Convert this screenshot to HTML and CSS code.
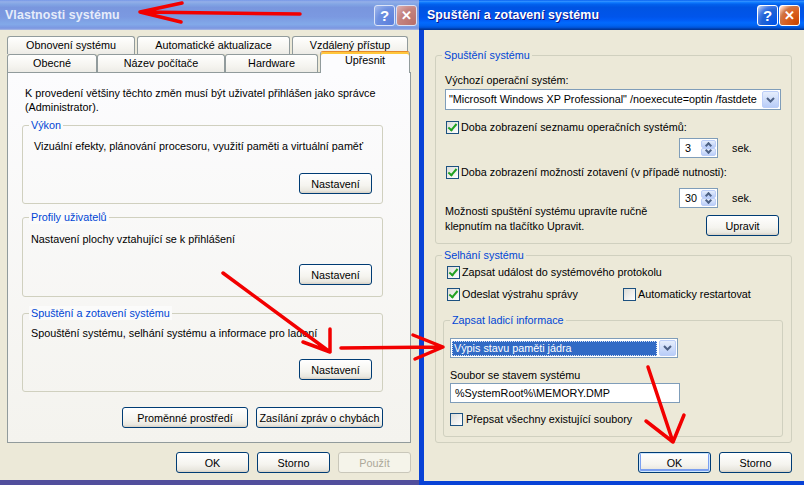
FILE: index.html
```html
<!DOCTYPE html>
<html lang="cs">
<head>
    <meta charset="UTF-8">
    <title>Vlastnosti systému</title>
    <link rel="stylesheet" href="styles.css">
</head>
<body>
    <div class="win win-left">
        <div class="titlebar">
            <span class="title-text">Vlastnosti systému</span>
            <div class="title-btns">
                <span class="tbtn help">?</span>
                <span class="tbtn close">&#x2715;</span>
            </div>
        </div>
        <div class="client">
            <div class="tabs-row">
                <div class="tab w128">Obnovení systému</div>
                <div class="tab w153">Automatické aktualizace</div>
                <div class="tab w116">Vzdálený přístup</div>
            </div>
            <div class="tabs-row front">
                <div class="tab w90">Obecné</div>
                <div class="tab w128">Název počítače</div>
                <div class="tab w93">Hardware</div>
                <div class="tab w90 active">Upřesnit</div>
            </div>
            <div class="tab-panel">
                <p class="intro">K provedení většiny těchto změn musí být uživatel přihlášen jako správce<br>(Administrator).</p>

                <div class="group g-perf">
                    <span class="group-title">Výkon</span>
                    <div class="group-text">Vizuální efekty, plánování procesoru, využití paměti a virtuální paměť</div>
                    <button class="btn">Nastavení</button>
                </div>

                <div class="group g-prof">
                    <span class="group-title">Profily uživatelů</span>
                    <div class="group-text">Nastavení plochy vztahující se k přihlášení</div>
                    <button class="btn">Nastavení</button>
                </div>

                <div class="group g-boot">
                    <span class="group-title">Spuštění a zotavení systému</span>
                    <div class="group-text">Spouštění systému, selhání systému a informace pro ladení</div>
                    <button class="btn">Nastavení</button>
                </div>

                <div class="panel-btns">
                    <button class="btn w126">Proměnné prostředí</button>
                    <button class="btn w127">Zasílání zpráv o chybách</button>
                </div>
            </div>
            <div class="dialog-btns">
                <button class="btn">OK</button>
                <button class="btn">Storno</button>
                <button class="btn disabled">Použít</button>
            </div>
        </div>
    </div>

    <div class="win win-right">
        <div class="titlebar">
            <span class="title-text">Spuštění a zotavení systému</span>
            <div class="title-btns">
                <span class="tbtn help">?</span>
                <span class="tbtn close">&#x2715;</span>
            </div>
        </div>
        <div class="client">
            <div class="group g-start">
                <span class="group-title">Spuštění systému</span>
                <div class="line">Výchozí operační systém:</div>
                <div class="combo wide">
                    <span class="combo-text">"Microsoft Windows XP Professional" /noexecute=optin /fastdete</span>
                    <span class="drop"><svg width="9" height="6" viewBox="0 0 9 6"><path d="M1 1 L4.5 4.5 L8 1" fill="none" stroke="#4d6185" stroke-width="2"/></svg></span>
                </div>
                <label class="check-row r1"><span class="check on"></span>Doba zobrazení seznamu operačních systémů:</label>
                <div class="spin-row s1">
                    <div class="spin"><span class="spin-val">3</span><span class="spin-btns"><span class="up"></span><span class="down"></span></span></div>
                    <span>sek.</span>
                </div>
                <label class="check-row r2"><span class="check on"></span>Doba zobrazení možností zotavení (v případě nutnosti):</label>
                <div class="spin-row s2">
                    <div class="spin"><span class="spin-val">30</span><span class="spin-btns"><span class="up"></span><span class="down"></span></span></div>
                    <span>sek.</span>
                </div>
                <div class="edit-row">
                    <div class="edit-text">Možnosti spuštění systému upravíte ručně<br>klepnutím na tlačítko Upravit.</div>
                    <button class="btn">Upravit</button>
                </div>
            </div>

            <div class="group g-fail">
                <span class="group-title">Selhání systému</span>
                <label class="check-row"><span class="check on"></span>Zapsat událost do systémového protokolu</label>
                <div class="check-pair">
                    <label class="check-row first"><span class="check on"></span>Odeslat výstrahu správy</label>
                    <label class="check-row"><span class="check"></span>Automaticky restartovat</label>
                </div>
                <div class="group g-debug">
                    <span class="group-title">Zapsat ladicí informace</span>
                    <div class="combo narrow">
                        <span class="combo-text selected">Výpis stavu paměti jádra</span>
                        <span class="drop"><svg width="9" height="6" viewBox="0 0 9 6"><path d="M1 1 L4.5 4.5 L8 1" fill="none" stroke="#4d6185" stroke-width="2"/></svg></span>
                    </div>
                    <div class="line dump-label">Soubor se stavem systému</div>
                    <div class="textbox">%SystemRoot%\MEMORY.DMP</div>
                    <label class="check-row overwrite"><span class="check"></span>Přepsat všechny existující soubory</label>
                </div>
            </div>

            <div class="dialog-btns">
                <button class="btn default">OK</button>
                <button class="btn">Storno</button>
            </div>
        </div>
    </div>

    <!-- red hand-drawn arrows over the screenshot -->
    <svg class="arrows" width="804" height="485" viewBox="0 0 804 485">
        <g fill="none" stroke="#f20000" stroke-width="3.5" stroke-linecap="round" stroke-linejoin="round">
            <path d="M300 14 L140 12 M182 3 L140 12 L181 22"/>
            <path d="M223 273 L330 352 M330 329 L330 352 M303 342 L330 352"/>
            <path d="M341 348 L443 347 M413 335 L443 347 L415 359"/>
            <path d="M648 367 L673 442 M646 421 L673 442 L684 415"/>
        </g>
    </svg>
</body>
</html>
```

FILE: styles.css
```css
body {
    margin: 0;
    width: 804px;
    height: 485px;
    overflow: hidden;
    position: relative;
    background: #514e9c;
    font-family: "Liberation Sans", Arial, sans-serif;
    font-size: 10.8px;
    color: #000;
}

/* windows */
.win {
    position: absolute;
    top: 0;
    display: flex;
    flex-direction: column;
}

.win-left {
    left: 0;
    width: 419px;
    height: 480px;
    background: #ece9d8;
}

.win-right {
    left: 419px;
    width: 385px;
    height: 485px;
    background: #0842d6;
}

.titlebar {
    height: 30px;
    flex: none;
    display: flex;
    align-items: center;
    justify-content: space-between;
    box-sizing: border-box;
}

.win-left .titlebar {
    padding: 0 2px 0 5px;
    background: linear-gradient(#7697e7 0%, #94afe8 6%, #82a5e4 14%, #7996de 25%, #7b99e1 56%, #82a9e9 81%, #7b96e1 94%, #abbae3 100%);
}

.win-right .titlebar {
    padding: 0 4px 0 8px;
    background: linear-gradient(#0058ee 0%, #3593ff 4%, #127dff 8%, #0262ee 14%, #0054e3 24%, #0055eb 56%, #005bf5 66%, #026afe 76%, #0062ef 86%, #0052d6 92%, #0040ab 96%, #003092 100%);
}

.title-text {
    color: #fff;
    font-weight: bold;
    font-size: 12.4px;
    letter-spacing: 0.1px;
}

.win-left .title-text {
    color: #e6ecfa;
}

.win-right .title-text {
    text-shadow: 1px 1px #0f1089;
}

.title-btns {
    display: flex;
    gap: 1px;
}

.tbtn {
    width: 21px;
    height: 21px;
    box-sizing: border-box;
    border: 1px solid #fff;
    border-radius: 3px;
    color: #fff;
    display: flex;
    align-items: center;
    justify-content: center;
    font-weight: bold;
    font-size: 15px;
}

.tbtn.help {
    background: radial-gradient(circle at 90% 90%, #0054e9 0%, #2263d5 55%, #4479e4 70%, #a3bbec 90%, #fff 100%);
}

.tbtn.close {
    background: radial-gradient(circle at 90% 90%, #cc4600 0%, #dc6527 55%, #cd7546 70%, #ffccb2 90%, #fff 100%);
    font-size: 13px;
}

.win-left .tbtn {
    border-color: #dbe4f8;
}

.win-left .tbtn.help {
    background: radial-gradient(circle at 90% 90%, #5b80dd 0%, #6d8fe0 60%, #a6bced 100%);
}

.win-left .tbtn.close {
    background: radial-gradient(circle at 90% 90%, #b9706c 0%, #c4837f 60%, #ddb5b8 100%);
}

.client {
    background: #ece9d8;
    flex: 1;
    display: flex;
    flex-direction: column;
}

.win-left .client {
    padding: 6px 8px 0 7px;
}

.win-right .client {
    margin: 0 0 4px 5px;
    padding: 25px 12px 0 11px;
}

/* tabs */
.tabs-row {
    display: flex;
    height: 18px;
}

.tabs-row .tab {
    margin-right: 2px;
}

.tabs-row.front .tab {
    margin-right: 0;
}

.tab {
    box-sizing: border-box;
    height: 18px;
    border: 1px solid #919b9c;
    border-bottom: none;
    border-radius: 3px 3px 0 0;
    background: linear-gradient(#fffffe, #f4f3ee 70%, #ecebe6);
    text-align: center;
    line-height: 16px;
    white-space: nowrap;
}

.tab.active {
    position: relative;
    z-index: 1;
    align-self: flex-end;
    height: 22px;
    margin: 0 0 -1px 2px;
    background: #fcfcfe;
    border-top: 1px solid #e68b2c;
    box-shadow: inset 0 2px #ffc73c;
    line-height: 17px;
}

.w90 { width: 90px; }
.w93 { width: 93px; }
.w116 { width: 116px; }
.w128 { width: 128px; }
.w153 { width: 153px; }

.tab-panel {
    width: 404px;
    height: 371px;
    box-sizing: border-box;
    border: 1px solid #919b9c;
    background: linear-gradient(#fcfcfe, #f4f3ee);
}

.intro {
    margin: 0;
    padding: 13px 0 0 17px;
    line-height: 14px;
}

/* group boxes */
.group {
    position: relative;
    box-sizing: border-box;
    border: 1px solid #d0d0bf;
    border-radius: 3px;
    display: flex;
    flex-direction: column;
}

.group-title {
    position: absolute;
    top: -8px;
    left: 6px;
    padding: 0 2px;
    line-height: 14px;
    color: #0046d5;
    background: #fbfbfa;
}

.win-right .group-title {
    background: #ece9d8;
}

.group-text {
    line-height: 14px;
}

.group .btn {
    align-self: flex-end;
    margin-top: auto;
}

.tab-panel .group {
    margin: 0 27px 0 14px;
}

.g-perf {
    margin-top: 11px !important;
    height: 79px;
    padding: 13px 10px 9px 11px;
}

.g-prof {
    margin-top: 13px !important;
    height: 80px;
    padding: 14px 10px 11px 8px;
}

.g-boot {
    margin-top: 16px !important;
    height: 79px;
    padding: 12px 10px 11px 8px;
}

.panel-btns {
    display: flex;
    justify-content: flex-end;
    gap: 8px;
    margin: 15px 27px 0 0;
}

.dialog-btns {
    display: flex;
    justify-content: flex-end;
    gap: 8px;
    margin-top: 9px;
}

/* buttons */
.btn {
    box-sizing: border-box;
    width: 73px;
    height: 21px;
    padding: 0;
    border: 1px solid #003c74;
    border-radius: 3px;
    background: linear-gradient(#fff 0%, #f5f4ef 60%, #e9e7df 88%, #d6d0c5 100%);
    font-family: inherit;
    font-size: 10.8px;
    color: #000;
    white-space: nowrap;
}

.btn.w126 { width: 126px; }
.btn.w127 { width: 127px; }

.btn.disabled {
    border-color: #c9c7ba;
    background: #f5f4ea;
    color: #aca899;
}

.btn.default {
    box-shadow: inset 0 0 0 1px #cee7ff, inset 0 -1px 0 2px #7b9ff0;
}

/* right dialog */
.g-start {
    height: 189px;
    padding: 17px 12px 0 9px;
}

.line {
    line-height: 14px;
}

.combo {
    box-sizing: border-box;
    height: 21px;
    border: 1px solid #7f9db9;
    background: #fff;
    display: flex;
    align-items: center;
    padding: 1px;
    gap: 2px;
}

.combo.wide {
    width: 336px;
    margin-top: 2px;
}

.combo.narrow {
    width: 228px;
    height: 20px;
}

.combo-text {
    flex: 1;
    overflow: hidden;
    white-space: nowrap;
    padding-left: 2px;
    line-height: 15px;
}

.combo-text.selected {
    background: #316ac5;
    color: #fff;
    outline: 1px dotted #d8e2f5;
    outline-offset: -1px;
}

.drop {
    width: 17px;
    height: 17px;
    flex: none;
    box-sizing: border-box;
    border: 1px solid #bccef8;
    border-radius: 2px;
    background: linear-gradient(#e6eefc, #b9cdf8);
    display: flex;
    align-items: center;
    justify-content: center;
}

.combo.narrow .drop {
    height: 16px;
}

.check-row {
    display: flex;
    align-items: center;
    gap: 2px;
    line-height: 14px;
}

.check {
    width: 13px;
    height: 13px;
    box-sizing: border-box;
    border: 1px solid #1c5180;
    background: linear-gradient(135deg, #dcdcd7, #fff);
    flex: none;
    margin-left: 1px;
    position: relative;
}

.check.on::after {
    content: "";
    position: absolute;
    left: 3px;
    top: 0;
    width: 3px;
    height: 7px;
    border: solid #21a121;
    border-width: 0 2px 2px 0;
    transform: rotate(40deg);
}

.check-row.r1 {
    margin-top: 10px;
}

.check-row.r2 {
    margin-top: 7px;
}

.spin-row {
    display: flex;
    align-items: center;
    gap: 14px;
    margin-left: 234px;
}

.spin-row.s1 {
    margin-top: 4px;
}

.spin-row.s2 {
    margin-top: 9px;
}

.spin {
    box-sizing: border-box;
    width: 39px;
    height: 20px;
    border: 1px solid #7f9db9;
    background: #fff;
    display: flex;
    align-items: center;
    padding: 1px;
}

.spin-val {
    flex: 1;
    padding-left: 4px;
}

.spin-btns {
    width: 15px;
    height: 16px;
    display: flex;
    flex-direction: column;
}

.spin-btns span {
    flex: 1;
    border: 1px solid #bccef8;
    border-radius: 2px;
    background: linear-gradient(#e6eefc, #b9cdf8);
    position: relative;
}

.spin-btns span::after {
    content: "";
    position: absolute;
    left: 4px;
    width: 3px;
    height: 3px;
    border: solid #4d6185;
    border-width: 2px 2px 0 0;
}

.spin-btns .up::after {
    top: 2px;
    transform: rotate(-45deg);
}

.spin-btns .down::after {
    top: -1px;
    transform: rotate(135deg);
}

.edit-row {
    display: flex;
    justify-content: space-between;
    align-items: flex-start;
    margin-top: -4px;
}

.edit-text {
    line-height: 15px;
}

.edit-row .btn {
    margin-top: 11px;
}

.g-fail {
    margin-top: 11px;
    height: 188px;
    padding: 9px 0 0 10px;
}

.check-pair {
    display: flex;
    margin-top: 8px;
}

.check-pair .first {
    width: 176px;
}

.g-debug {
    margin: 19px 0 0 -3px;
    width: 340px;
    height: 117px;
    padding: 17px 0 0 6px;
}

.dump-label {
    margin-top: 10px;
}

.textbox {
    box-sizing: border-box;
    width: 230px;
    height: 20px;
    margin-top: 1px;
    border: 1px solid #7f9db9;
    background: #fff;
    padding-left: 4px;
    line-height: 18px;
}

.check-row.overwrite {
    margin-top: 9px;
    gap: 3px;
}

.check-row.overwrite .check {
    margin-left: 0;
}

.arrows {
    position: absolute;
    left: 0;
    top: 0;
    pointer-events: none;
}
```
